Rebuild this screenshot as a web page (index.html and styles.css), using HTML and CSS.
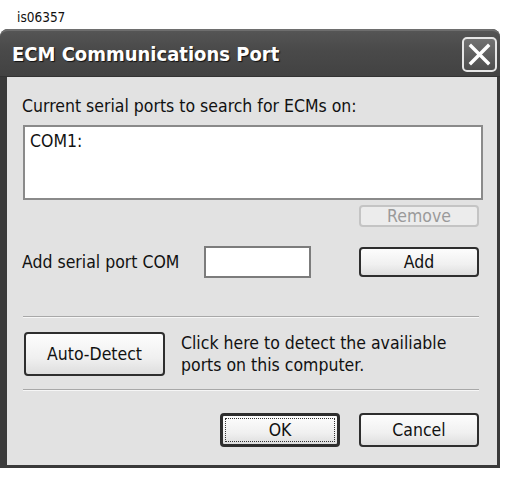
FILE: index.html
```html
<!DOCTYPE html>
<html>
    <head>
        <meta charset="utf-8">
        <title>ECM Communications Port</title>
        <link rel="stylesheet" href="styles.css">
    </head>
    <body>
        <div class="caption">is06357</div>
        <div class="window">
            <div class="titlebar">
                <div class="title">ECM Communications Port</div>
                <div class="close">
                    <svg width="23" height="23" viewBox="0 0 23 23">
                        <path d="M3 3 L20 20 M20 3 L3 20" stroke="white" stroke-width="3.4" stroke-linecap="square"/>
                    </svg>
                </div>
            </div>
            <div class="client">
                <div class="label">Current serial ports to search for ECMs on:</div>
                <div class="listbox">COM1:</div>
                <div class="row right">
                    <button class="btn small" disabled>Remove</button>
                </div>
                <div class="row addrow">
                    <span class="addlabel">Add serial port COM</span>
                    <input class="port" type="text">
                    <button class="btn add">Add</button>
                </div>
                <div class="sep first"></div>
                <div class="row detect">
                    <button class="btn auto">Auto-Detect</button>
                    <div class="hint">Click here to detect the availiable<br>ports on this computer.</div>
                </div>
                <div class="sep"></div>
                <div class="row right bottom">
                    <button class="btn ok"><span class="focus">OK</span></button>
                    <button class="btn">Cancel</button>
                </div>
            </div>
        </div>
    </body>
</html>
```

FILE: styles.css
```css
body{
    margin:0;
    background:#fff;
    font-family:"DejaVu Sans Condensed","DejaVu Sans",sans-serif;
    color:#111;
}
.caption{
    height:29px;
    padding:10px 0 0 17px;
    box-sizing:border-box;
    font-size:13.5px;
    line-height:14px;
}
.window{
    width:500px;
    background:#3a3a3a;
    border-radius:8px 8px 0 0;
    padding:0 3px 3px 7px;
    box-sizing:border-box;
}
.titlebar{
    height:48px;
    display:flex;
    align-items:center;
    justify-content:space-between;
    background:linear-gradient(#555,#4a4a4a 40%,#424242);
    margin-left:-7px;
    margin-right:-3px;
    padding-left:12px;
    padding-right:3px;
    border-radius:8px 8px 0 0;
    border-top:2px solid #6e6e6e;
    border-bottom:1px solid #333;
    box-sizing:border-box;
}
.title{
    font-weight:bold;
    font-size:20px;
    color:#fff;
    text-shadow:1px 1px 1px #111;
}
.close{
    width:35px;
    height:35px;
    box-sizing:border-box;
    border:2px solid #e6e6e6;
    border-radius:5px;
    background:linear-gradient(#727272,#4e4e4e);
    display:flex;
    align-items:center;
    justify-content:center;
    margin-top:2px;
}
.client{
    background:#e2e2e2;
    padding:19px 14px 18px 15px;
    font-size:17.5px;
}
.label{
    line-height:20px;
    height:29px;
}
.listbox{
    height:75px;
    box-sizing:border-box;
    margin-left:1px;
    background:#fff;
    border:2px solid #8a8a8a;
    padding:4px 5px;
    line-height:20px;
}
.row{
    display:flex;
    align-items:center;
}
.right{
    justify-content:flex-end;
    margin-right:4px;
}
.btn{
    width:120px;
    height:30px;
    box-sizing:border-box;
    border:2px solid #2e2e2e;
    border-radius:4px;
    background:linear-gradient(#fdfdfd,#f0f0f0 60%,#dedede);
    font-family:inherit;
    font-size:17.5px;
    color:#111;
    padding:0;
}
.btn.small{
    height:22px;
    margin-top:5px;
    border-color:#c4c4c4;
    color:#9a9a9a;
    background:#ececec;
    line-height:18px;
}
.addrow{
    margin-top:19px;
    height:32px;
}
.addlabel{
    width:182px;
}
.port{
    width:107px;
    height:32px;
    box-sizing:border-box;
    border:2px solid #7c7c7c;
    background:#fff;
    margin:0;
}
.btn.add{
    margin-left:auto;
    margin-right:4px;
}
.sep{
    height:0;
    border-top:1px solid #a8a8a8;
    border-bottom:1px solid #f6f6f6;
    margin:0 4px 0 1px;
}
.sep.first{
    margin-top:38px;
}
.detect{
    margin:14px 0 13px 2px;
}
.btn.auto{
    width:141px;
    height:44px;
}
.hint{
    margin-left:16px;
    line-height:22px;
}
.bottom{
    margin-top:22px;
    gap:19px;
}
.btn.ok{
    border-width:3px;
    padding:2px;
}
.btn.ok .focus{
    display:flex;
    align-items:center;
    justify-content:center;
    height:100%;
    border:1px dotted #333;
    box-sizing:border-box;
}
.bottom .btn{
    height:34px;
}
```
